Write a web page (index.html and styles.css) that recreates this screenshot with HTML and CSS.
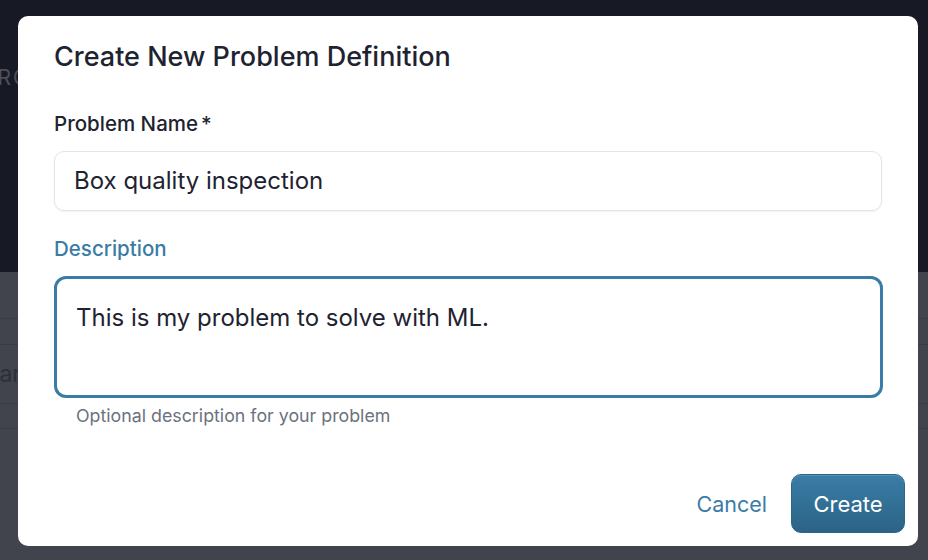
FILE: index.html
```html
<!DOCTYPE html>
<html lang="en">
<head>
<meta charset="utf-8">
<title>Create New Problem Definition</title>
<link rel="stylesheet" href="styles.css">
</head>
<body>
<div class="page">
  <header class="hero">
    <div class="hero-title"><span>PROBLEMS</span></div>
  </header>
  <section class="list">
    <div class="row"></div>
    <div class="row search"><span>Search</span></div>
    <div class="row"></div>
  </section>
</div>

<div class="modal" role="dialog" aria-labelledby="dlg-title">
  <h2 id="dlg-title" class="modal-title">Create New Problem Definition</h2>
  <form class="form">
    <div class="field">
      <label class="label" for="name">Problem Name<span class="req">*</span></label>
      <div class="input" id="name">Box quality inspection</div>
    </div>
    <div class="field">
      <label class="label label-focus" for="desc">Description</label>
      <div class="textarea" id="desc">This is my problem to solve with ML.</div>
      <div class="help">Optional description for your problem</div>
    </div>
  </form>
  <div class="actions">
    <button class="btn-link" type="button">Cancel</button>
    <button class="btn-primary" type="button">Create</button>
  </div>
</div>
</body>
</html>
```
FILE: styles.css
```css
* { box-sizing: border-box; }
html, body { margin: 0; padding: 0; }
body {
  width: 928px;
  height: 560px;
  overflow: hidden;
  background: #41444c;
  font-family: Inter, "Noto Sans", sans-serif;
  position: relative;
}
.page { display: flex; flex-direction: column; }
.hero {
  height: 272px;
  background: #171a24;
  padding: 64px 0 0 0;
}
.hero-title {
  width: 18px;
  overflow: hidden;
  white-space: nowrap;
  color: #4b4f5a;
  font-size: 21px;
  letter-spacing: 2px;
  line-height: 28px;
}
.hero-title span { display: inline-block; margin-left: -18px; }
.list { display: flex; flex-direction: column; padding-top: 46px; }
.row {
  height: 26px;
  border-top: 1px solid #393c44;
}
.row.search {
  height: 59px;
  line-height: 58px;
  color: #2c2f37;
  font-size: 23px;
  white-space: nowrap;
}
.row.search span {
  display: block;
  width: 18px;
  overflow: hidden;
  text-indent: -29px;
}
.row:last-child { border-bottom: 1px solid #393c44; }

.modal {
  position: absolute;
  left: 18px;
  top: 16px;
  width: 900px;
  height: 530px;
  background: #ffffff;
  border-radius: 10px;
  padding: 26px 36px 0 36px;
  display: flex;
  flex-direction: column;
}
.modal-title {
  margin: 0;
  font-size: 27px;
  font-weight: 500;
  line-height: 30px;
  color: #1e2331;
}
.form { display: flex; flex-direction: column; gap: 26px; margin-top: 40px; }
.field { display: flex; flex-direction: column; }
.label {
  font-size: 20.5px;
  font-weight: 500;
  line-height: 24px;
  color: #1e2331;
  margin-bottom: 15px;
}
.req { margin-left: 3px; }
.label-focus { color: #3a7ca5; }
.input {
  width: 828px;
  height: 60px;
  border: 1px solid #e2e4e8;
  border-radius: 10px;
  box-shadow: 0 1px 2px rgba(16, 24, 40, 0.06);
  padding: 0 19px;
  font-size: 24px;
  line-height: 58px;
  color: #1e2331;
}
.textarea {
  width: 829px;
  height: 122px;
  border: 3px solid #3a7ca5;
  border-radius: 12px;
  padding: 24px 19px;
  font-size: 24px;
  line-height: 30px;
  color: #1e2331;
}
.help {
  margin-top: 7px;
  padding-left: 22px;
  font-size: 17.8px;
  line-height: 22px;
  color: #6b7280;
}
.actions {
  margin-top: auto;
  margin-bottom: 13px;
  margin-right: -23px;
  display: flex;
  justify-content: flex-end;
  align-items: center;
  gap: 24px;
}
.btn-link {
  background: none;
  border: none;
  padding: 0;
  font-family: inherit;
  font-size: 21.5px;
  color: #3a7ca5;
}
.btn-primary {
  width: 114px;
  height: 59px;
  border-radius: 10px;
  border: 1px solid #2c6688;
  background: linear-gradient(#3a7da6, #2b6386);
  color: #ffffff;
  font-family: inherit;
  font-size: 22px;
  box-shadow: inset 0 1px 0 rgba(255,255,255,0.15);
}
```
